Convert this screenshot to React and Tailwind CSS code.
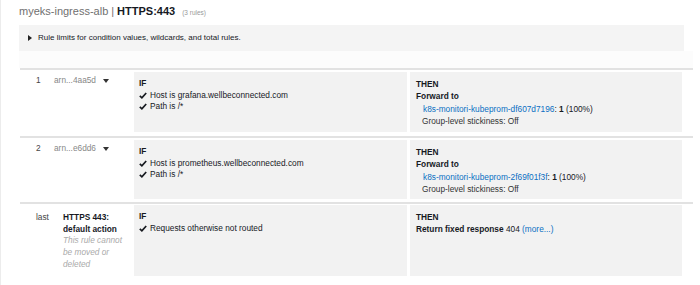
import React from "react";

const Check = () => (
  <svg width="8" height="7" viewBox="0 0 8 7" className="mr-[3px] shrink-0">
    <path d="M0.8 3.8 L2.9 5.8 L7.2 1" fill="none" stroke="#16191f" strokeWidth="1.7" />
  </svg>
);

const Caret = () => (
  <svg width="6" height="4" viewBox="0 0 6 4" className="ml-[7px]">
    <polygon points="0,0 6,0 3,4" fill="#333" />
  </svg>
);

function RuleRow({ num, arn, host, link, h, pt, pb }) {
  return (
    <div className={`flex border-t-2 border-[#e2e2e2] ${pt} ${pb}`}>
      <div className="w-[114px] flex pt-[3px]">
        <div className="w-[34px] pl-[16px] text-[#444]">{num}</div>
        <div className="flex items-center h-[12px] text-[#888]">
          {arn}
          <Caret />
        </div>
      </div>
      <div className={`w-[273px] ${h} bg-[#f2f2f2] pl-[5px] pt-[6px]`}>
        <div className="font-bold">IF</div>
        <div className="flex items-center">
          <Check />
          Host is {host}
        </div>
        <div className="flex items-center">
          <Check />
          Path is /*
        </div>
      </div>
      <div className={`w-[272px] ml-[3px] ${h} bg-[#f2f2f2] pl-[6px] pt-[6px] leading-[12.3px]`}>
        <div className="font-bold">THEN</div>
        <div className="font-bold">Forward to</div>
        <div className="pl-[7px]">
          <span className="text-[#0a6fc2]">{link}</span>: <span className="font-bold">1</span> (100%)
        </div>
        <div className="pl-[6px] text-[#333]">Group-level stickiness: Off</div>
      </div>
    </div>
  );
}

export default function App() {
  return (
    <div className="w-[700px] h-[285px] overflow-hidden bg-white border-l border-[#ececec] font-['Liberation_Sans',Arial,sans-serif] text-[#16191f] text-[8.3px] leading-[11.5px]">
      <div className="h-[25px] pl-[18px] pt-[4px] flex items-baseline leading-[14px]">
        <span className="text-[11px] text-[#707070]">myeks-ingress-alb</span>
        <span className="text-[11px] text-[#707070] mx-[3px]">|</span>
        <span className="text-[11px] font-bold text-[#16191f]">HTTPS:443</span>
        <span className="text-[6.5px] text-[#999] ml-[7px]">(3 rules)</span>
      </div>
      <div className="ml-[18px] w-[665px] h-[26px] bg-[#f4f4f4] flex items-center pl-[9px] text-[8px]">
        <svg width="4" height="6" viewBox="0 0 4 6" className="mr-[6px]">
          <polygon points="0,0 4,3 0,6" fill="#222" />
        </svg>
        Rule limits for condition values, wildcards, and total rules.
      </div>
      <div className="h-[17px] ml-[18px] w-[674px] bg-[#fcfcfc]" />
      <div className="ml-[19px] w-[673px]">
        <RuleRow
          num="1"
          arn="arn...4aa5d"
          host="grafana.wellbeconnected.com"
          link="k8s-monitori-kubeprom-df607d7196"
          h="h-[60px]"
          pt="pt-[2px]"
          pb="pb-[4px]"
        />
        <RuleRow
          num="2"
          arn="arn...e6dd6"
          host="prometheus.wellbeconnected.com"
          link="k8s-monitori-kubeprom-2f69f01f3f"
          h="h-[59px]"
          pt="pt-[2px]"
          pb="pb-[3px]"
        />
        <div className="flex border-t-2 border-[#e2e2e2] pt-[1px]">
          <div className="w-[114px] flex pt-[7px] leading-[11.7px]">
            <div className="w-[34px] pl-[16px] text-[#444]">last</div>
            <div className="pl-[9px] w-[80px] pr-[8px]">
              <div className="font-bold">HTTPS 443:</div>
              <div className="font-bold">default action</div>
              <div className="italic text-[#aaa]">This rule cannot be moved or deleted</div>
            </div>
          </div>
          <div className="w-[273px] h-[71px] bg-[#f2f2f2] pl-[5px] pt-[6px]">
            <div className="font-bold">IF</div>
            <div className="flex items-center">
              <Check />
              Requests otherwise not routed
            </div>
          </div>
          <div className="w-[272px] ml-[3px] h-[71px] bg-[#f2f2f2] pl-[6px] pt-[6px] leading-[12.3px]">
            <div className="font-bold">THEN</div>
            <div>
              <span className="font-bold">Return fixed response</span> 404{" "}
              <span className="text-[#0a6fc2]">(more...)</span>
            </div>
          </div>
        </div>
      </div>
    </div>
  );
}
